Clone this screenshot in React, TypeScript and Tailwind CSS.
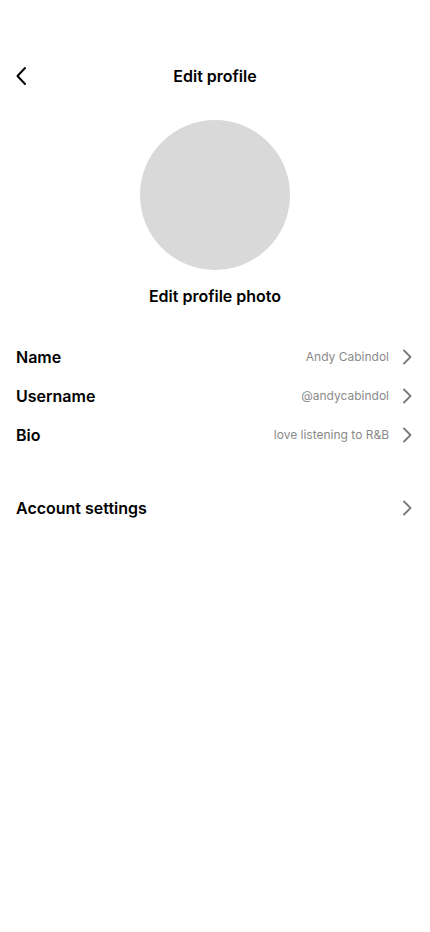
import React from 'react';

const Chevron = () => (
  <svg width="14" height="16" viewBox="0 0 14 16" fill="none" className="shrink-0">
    <polyline points="4,1.5 10.5,8 4,14.5" stroke="#7a7a7a" strokeWidth="1.8" strokeLinecap="round" strokeLinejoin="round" />
  </svg>
);

interface RowProps {
  label: string;
  value?: string;
}

const Row: React.FC<RowProps> = ({ label, value }) => (
  <div className="flex items-center justify-between h-[39px] px-4">
    <span className="text-[16px] font-semibold text-black">{label}</span>
    <div className="flex items-center gap-[11px]">
      {value && <span className="text-[12px] text-[#8a8a8a]">{value}</span>}
      <Chevron />
    </div>
  </div>
);

export default function App() {
  return (
    <div className="min-h-[932px] w-full bg-white pt-[56px]" style={{ fontFamily: 'Inter, "Liberation Sans", sans-serif' }}>
      {/* Header */}
      <div className="relative flex items-center justify-center h-[40px]">
        <button className="absolute left-[14px] top-[10px]">
          <svg width="14" height="20" viewBox="0 0 14 20" fill="none">
            <polyline points="11,2 3.5,10 11,18" stroke="#000" strokeWidth="2" strokeLinecap="round" strokeLinejoin="round" />
          </svg>
        </button>
        <span className="text-[16px] font-semibold text-black">Edit profile</span>
      </div>

      {/* Avatar */}
      <div className="flex flex-col items-center mt-[24px]">
        <div className="w-[150px] h-[150px] rounded-full bg-[#d9d9d9]" />
        <span className="mt-[14px] text-[16px] leading-[24px] font-semibold text-black">Edit profile photo</span>
      </div>

      {/* Fields */}
      <div className="mt-[29px]">
        <Row label="Name" value="Andy Cabindol" />
        <Row label="Username" value="@andycabindol" />
        <Row label="Bio" value="love listening to R&B" />
      </div>

      <div className="mt-[34px]">
        <Row label="Account settings" />
      </div>
    </div>
  );
}
